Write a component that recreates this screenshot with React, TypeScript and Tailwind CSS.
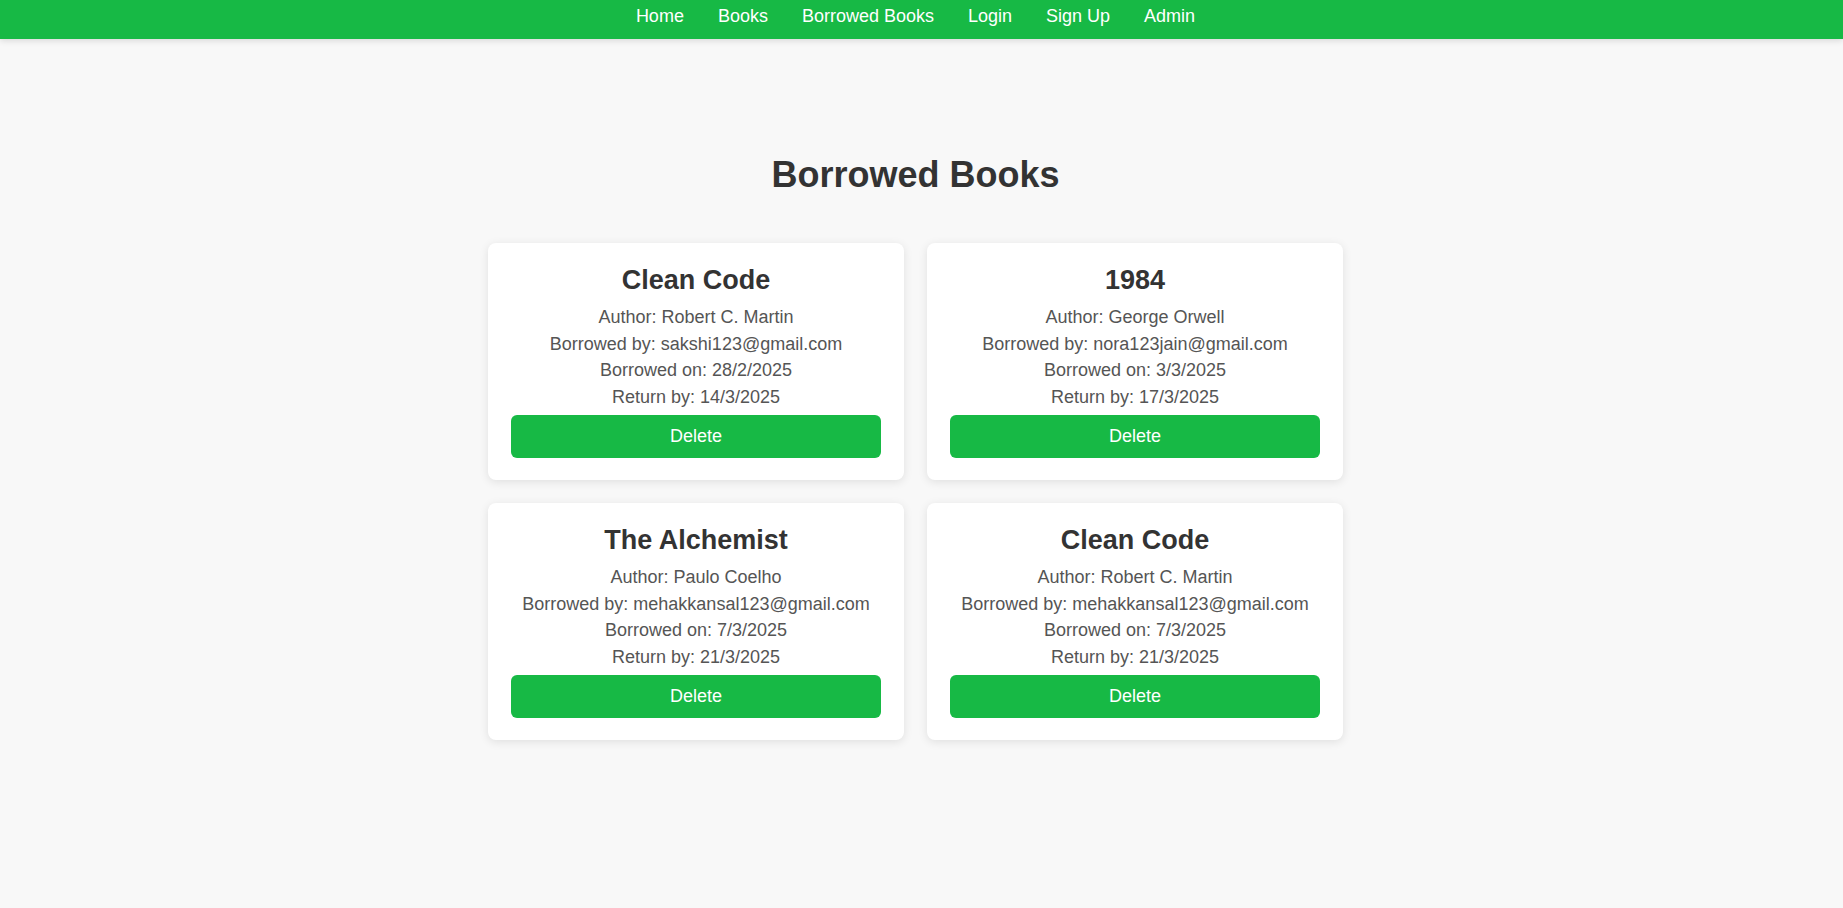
const links = ['Home', 'Books', 'Borrowed Books', 'Login', 'Sign Up', 'Admin']

type Loan = { title: string, author: string, user: string, borrowed: string, due: string }

const loans: Loan[] = [
  { title: 'Clean Code', author: 'Robert C. Martin', user: 'sakshi123@gmail.com', borrowed: '28/2/2025', due: '14/3/2025' },
  { title: '1984', author: 'George Orwell', user: 'nora123jain@gmail.com', borrowed: '3/3/2025', due: '17/3/2025' },
  { title: 'The Alchemist', author: 'Paulo Coelho', user: 'mehakkansal123@gmail.com', borrowed: '7/3/2025', due: '21/3/2025' },
  { title: 'Clean Code', author: 'Robert C. Martin', user: 'mehakkansal123@gmail.com', borrowed: '7/3/2025', due: '21/3/2025' }
]

function LoanCard({ loan }: { loan: Loan }) {
  return (
    <div className="w-[416px] rounded-lg bg-white px-[23px] pt-[23px] pb-[22px] text-center shadow-[0_2px_10px_rgba(0,0,0,0.1)]">
      <h3 className="mb-[9px] text-[27px] font-bold leading-[29px] text-[#333]">{loan.title}</h3>
      <div className="text-[18px] leading-[26.7px] text-[#555]">
        <p>Author: {loan.author}</p>
        <p>Borrowed by: {loan.user}</p>
        <p>Borrowed on: {loan.borrowed}</p>
        <p>Return by: {loan.due}</p>
      </div>
      <button className="mt-[4px] h-[43px] w-full rounded-md bg-[#17b945] text-[18px] text-white">Delete</button>
    </div>
  )
}

export default function App() {
  return (
    <div className="min-h-screen bg-[#f8f8f8] font-['Liberation_Sans',Arial,sans-serif]">
      <nav className="h-[39px] bg-[#17b945] shadow-[0_2px_6px_rgba(0,0,0,0.12)]">
        <ul className="flex justify-center pr-[12px] pt-[6px]">
          {links.map(l => (
            <li key={l} className="px-[17px] text-[18px] leading-[20px] text-white">{l}</li>
          ))}
        </ul>
      </nav>

      <main className="flex flex-col items-center pr-[12px] pt-[116px]">
        <h2 className="text-[36px] font-bold leading-[40px] text-[#333]">Borrowed Books</h2>
        <div className="mt-[48px] grid grid-cols-[416px_416px] gap-x-[23px] gap-y-[23px]">
          {loans.map((loan, i) => (
            <LoanCard key={i} loan={loan} />
          ))}
        </div>
      </main>
    </div>
  )
}
